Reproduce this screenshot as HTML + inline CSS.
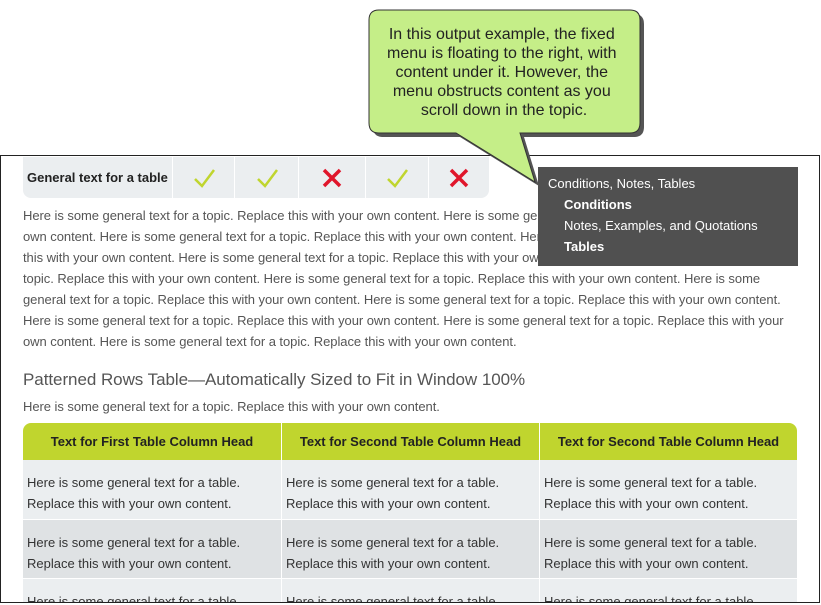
<!DOCTYPE html>
<html><head><meta charset="utf-8"><style>
*{margin:0;padding:0;box-sizing:border-box}
html{width:821px;height:605px;overflow:hidden}
body{width:821px;height:605px;background:#fff;position:relative;overflow:hidden;font-family:"Liberation Sans",Arial,sans-serif}
.frame{position:absolute;left:0;top:155px;width:820px;height:448px;border:1px solid #222;overflow:hidden}
.abs{position:absolute}
.line{position:absolute;left:23px;font-size:13px;color:#555;white-space:nowrap;letter-spacing:-0.05px}
.st{position:absolute;left:23px;top:157px;height:41px;width:466px;background:#ebeef0;border-radius:0 0 8px 8px}
.st div{position:absolute;top:0;height:41px;border-left:1px solid #fff;display:flex;align-items:center;justify-content:center}
.clip{position:absolute;left:0;top:0;width:821px;height:602px;overflow:hidden}
.tb{position:absolute;left:23px;top:423px;width:774px;height:179px}
.hd{position:absolute;top:0;height:37px;background:#c0d52e;color:#222;font-weight:bold;font-size:13px;display:flex;align-items:center;justify-content:center}
.cell{position:absolute;height:59px;font-size:13px;color:#333;line-height:21px;padding:12px 0 0 4px;border-left:1px solid #fff;overflow:hidden}
.last{height:24px}
</style></head><body>
<div class="frame"></div>
<div class="st">
 <div style="left:0;width:149px;border:none;font-weight:bold;font-size:13px;color:#222;justify-content:flex-start;padding-left:4px">General text for a table</div>
 <div style="left:149px;width:62px"><svg width="22" height="20"><path d="M2 11 L9 18 L21 2" stroke="#c0d52e" stroke-width="2.5" fill="none"/></svg></div>
 <div style="left:211px;width:64px"><svg width="22" height="20"><path d="M2 11 L9 18 L21 2" stroke="#c0d52e" stroke-width="2.5" fill="none"/></svg></div>
 <div style="left:275px;width:67px"><svg width="20" height="20"><path d="M2 2 L18 18 M18 2 L2 18" stroke="#e0162b" stroke-width="3.5"/></svg></div>
 <div style="left:342px;width:63px"><svg width="22" height="20"><path d="M2 11 L9 18 L21 2" stroke="#c0d52e" stroke-width="2.5" fill="none"/></svg></div>
 <div style="left:405px;width:61px"><svg width="20" height="20"><path d="M2 2 L18 18 M18 2 L2 18" stroke="#e0162b" stroke-width="3.5"/></svg></div>
</div>
<div class="line" style="top:208px">Here is some general text for a topic. Replace this with your own content. Here is some general text for a topic. Replace this with your</div>
<div class="line" style="top:229px">own content. Here is some general text for a topic. Replace this with your own content. Here is some general text for a topic. Replace</div>
<div class="line" style="top:250px">this with your own content. Here is some general text for a topic. Replace this with your own content. Here is some general text for a</div>
<div class="line" style="top:271px">topic. Replace this with your own content. Here is some general text for a topic. Replace this with your own content. Here is some</div>
<div class="line" style="top:292px">general text for a topic. Replace this with your own content. Here is some general text for a topic. Replace this with your own content.</div>
<div class="line" style="top:313px">Here is some general text for a topic. Replace this with your own content. Here is some general text for a topic. Replace this with your</div>
<div class="line" style="top:334px">own content. Here is some general text for a topic. Replace this with your own content.</div>
<div class="line" style="top:370px;font-size:17px;color:#555">Patterned Rows Table—Automatically Sized to Fit in Window 100%</div>
<div class="line" style="top:399px">Here is some general text for a topic. Replace this with your own content.</div>
<div class="clip">
<div class="tb">
 <div class="hd" style="left:0;width:258px;border-radius:8px 0 0 0">Text for First Table Column Head</div>
 <div class="hd" style="left:258px;width:258px;border-left:1px solid #fff">Text for Second Table Column Head</div>
 <div class="hd" style="left:516px;width:258px;border-left:1px solid #fff;border-radius:0 8px 0 0">Text for Second Table Column Head</div>
 <div class="cell" style="left:0;top:37px;width:258px;background:#ebeef0;border-left:none">Here is some general text for a table.<br>Replace this with your own content.</div>
 <div class="cell" style="left:258px;top:37px;width:258px;background:#ebeef0">Here is some general text for a table.<br>Replace this with your own content.</div>
 <div class="cell" style="left:516px;top:37px;width:258px;background:#ebeef0">Here is some general text for a table.<br>Replace this with your own content.</div>
 <div class="cell" style="left:0;top:96px;width:258px;background:#dfe2e4;border-left:none;border-top:1px solid #fff">Here is some general text for a table.<br>Replace this with your own content.</div>
 <div class="cell" style="left:258px;top:96px;width:258px;background:#dfe2e4;border-top:1px solid #fff">Here is some general text for a table.<br>Replace this with your own content.</div>
 <div class="cell" style="left:516px;top:96px;width:258px;background:#dfe2e4;border-top:1px solid #fff">Here is some general text for a table.<br>Replace this with your own content.</div>
 <div class="cell last" style="left:0;top:155px;width:258px;background:#ebeef0;border-left:none;border-top:1px solid #fff">Here is some general text for a table.</div>
 <div class="cell last" style="left:258px;top:155px;width:258px;background:#ebeef0;border-top:1px solid #fff">Here is some general text for a table.</div>
 <div class="cell last" style="left:516px;top:155px;width:258px;background:#ebeef0;border-top:1px solid #fff">Here is some general text for a table.</div>
</div>
</div>
<div class="abs" style="left:0;top:603px;width:821px;height:2px;background:#fff"></div>
<div class="abs" style="left:0;top:602px;width:820px;height:1px;background:#222"></div>
<div class="abs" style="left:538px;top:167px;width:260px;height:99px;background:#505050;color:#fff;font-size:13px;line-height:21px;padding:6px 0 0 10px">
Conditions, Notes, Tables<br>
<span style="padding-left:16px;font-weight:bold">Conditions</span><br>
<span style="padding-left:16px">Notes, Examples, and Quotations</span><br>
<span style="padding-left:16px;font-weight:bold">Tables</span>
</div>
<svg class="abs" style="left:360px;top:0" width="300" height="190">
 <g transform="translate(4,4)" fill="#555">
  <path d="M19 10 H270 Q280 10 280 20 V123 Q280 133 270 133 H160 L175 182 L96 133 H19 Q9 133 9 123 V20 Q9 10 19 10 Z"/>
 </g>
 <path d="M19 10 H270 Q280 10 280 20 V123 Q280 133 270 133 H160 L175 182 L96 133 H19 Q9 133 9 123 V20 Q9 10 19 10 Z" fill="#c5ee88" stroke="#333" stroke-width="1"/>
 <text font-family="Liberation Sans, Arial, sans-serif" font-size="16" fill="#222" text-anchor="middle">
  <tspan x="144" y="39">In this output example, the fixed</tspan>
  <tspan x="144" y="58">menu is floating to the right, with</tspan>
  <tspan x="144" y="77">content under it. However, the</tspan>
  <tspan x="144" y="96">menu obstructs content as you</tspan>
  <tspan x="144" y="115">scroll down in the topic.</tspan>
 </text>
</svg>
</body></html>
